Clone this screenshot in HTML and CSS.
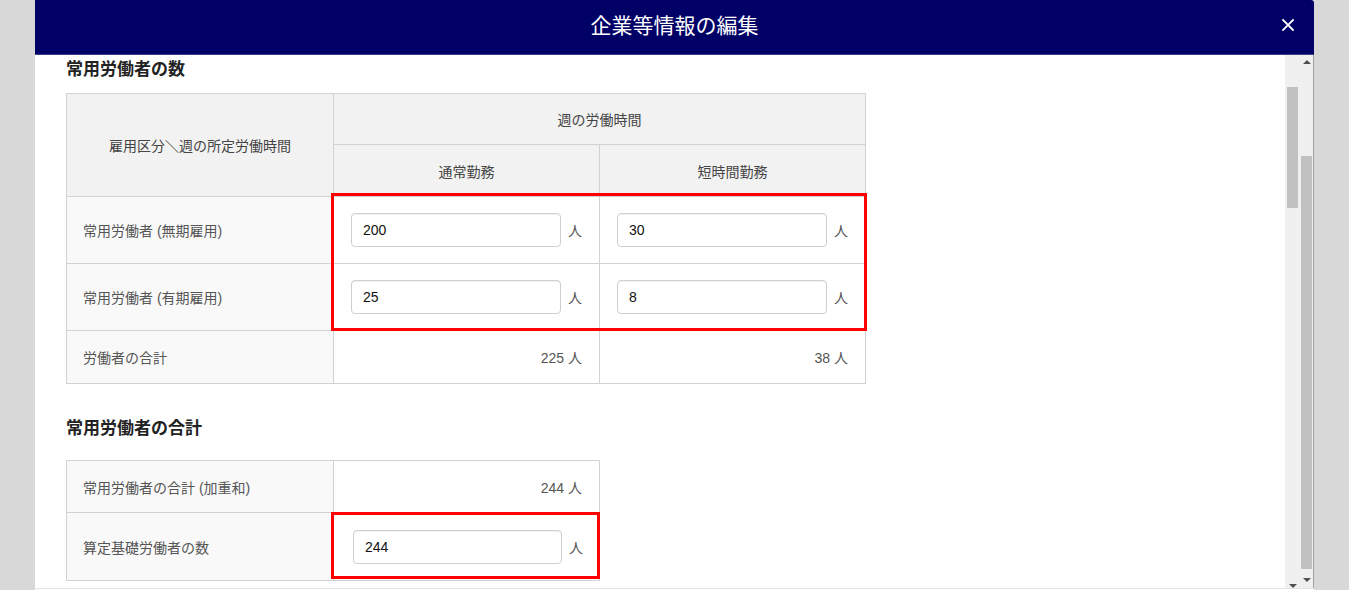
FILE: index.html
```html
<!DOCTYPE html>
<html lang="ja">
<head>
<meta charset="utf-8">
<title>企業等情報の編集</title>
<link rel="stylesheet" href="styles.css">
</head>
<body>
<div class="modal">
  <header class="modal-header">
    <span class="spacer"></span>
    <h1 class="modal-title">企業等情報の編集</h1>
    <button class="close" type="button" aria-label="閉じる">
      <svg width="12" height="12" viewBox="0 0 12 12"><path d="M1 1 L11 11 M11 1 L1 11" stroke="#fff" stroke-width="1.8" fill="none" stroke-linecap="square"/></svg>
    </button>
  </header>
  <div class="modal-body">
    <div class="content">
      <h2 class="section-title first">常用労働者の数</h2>
      <div class="table-wrap">
        <table class="grid grid-main">
          <colgroup><col class="c-label"><col class="c-val"><col class="c-val"></colgroup>
          <tr class="r-h1"><th rowspan="2" class="th-corner">雇用区分＼週の所定労働時間</th><th colspan="2">週の労働時間</th></tr>
          <tr class="r-h2"><th>通常勤務</th><th>短時間勤務</th></tr>
          <tr class="r-input">
            <td class="label">常用労働者 (無期雇用)</td>
            <td class="cell-input"><div class="field"><input class="num-input" type="text" value="200"><span class="unit">人</span></div></td>
            <td class="cell-input"><div class="field"><input class="num-input" type="text" value="30"><span class="unit">人</span></div></td>
          </tr>
          <tr class="r-input">
            <td class="label">常用労働者 (有期雇用)</td>
            <td class="cell-input"><div class="field"><input class="num-input" type="text" value="25"><span class="unit">人</span></div></td>
            <td class="cell-input"><div class="field"><input class="num-input" type="text" value="8"><span class="unit">人</span></div></td>
          </tr>
          <tr class="r-total">
            <td class="label">労働者の合計</td>
            <td class="num">225 人</td>
            <td class="num">38 人</td>
          </tr>
        </table>
        <div class="highlight hl-1"></div>
      </div>

      <h2 class="section-title second">常用労働者の合計</h2>
      <div class="table-wrap">
        <table class="grid grid-sum">
          <colgroup><col class="c-label"><col class="c-val"></colgroup>
          <tr class="r-sum1">
            <td class="label">常用労働者の合計 (加重和)</td>
            <td class="num">244 人</td>
          </tr>
          <tr class="r-sum2">
            <td class="label">算定基礎労働者の数</td>
            <td class="cell-input cell-input-sum"><div class="field"><input class="num-input" type="text" value="244"><span class="unit">人</span></div></td>
          </tr>
        </table>
        <div class="highlight hl-2"></div>
      </div>
    </div>
    <div class="scrollbar">
      <div class="lane lane-inner">
        <div class="thumb thumb-inner"></div>
        <div class="arrow-down arrow-inner"></div>
      </div>
      <div class="lane lane-outer">
        <div class="arrow-up"></div>
        <div class="thumb thumb-outer"></div>
        <div class="arrow-down arrow-outer"></div>
      </div>
    </div>
  </div>
  <div class="modal-footer"></div>
</div>
</body>
</html>
```

FILE: styles.css
```css
html, body {
  margin: 0;
  padding: 0;
  height: 590px;
  overflow: hidden;
  background: #d8d8d8;
  font-family: "Liberation Sans", "Noto Sans CJK JP", sans-serif;
}

.modal {
  margin: 0 35px;
  width: 1279px;
  height: 590px;
  background: #fff;
  display: flex;
  flex-direction: column;
  border-top-right-radius: 3px;
}

.modal-header {
  box-sizing: border-box;
  height: 55px;
  flex: none;
  background: #000066;
  border-bottom: 1px solid #3c3c8a;
  border-top-right-radius: 3px;
  display: grid;
  grid-template-columns: 1fr auto 1fr;
  align-items: center;
  padding-bottom: 5px;
}

.modal-title {
  margin: 0;
  color: #fff;
  font-family: "Noto Sans CJK JP", sans-serif;
  font-weight: 400;
  font-size: 21px;
  line-height: 1;
  letter-spacing: 0;
}

.close {
  justify-self: end;
  margin-right: 20px;
  padding: 0;
  border: 0;
  background: transparent;
  width: 12px;
  height: 12px;
  display: flex;
}

.modal-body {
  height: 533px;
  flex: none;
  display: flex;
  overflow: hidden;
}

.content {
  flex: 1;
  overflow: hidden;
  padding-left: 31px;
}

.section-title {
  margin: 0;
  font-size: 17px;
  line-height: 24px;
  font-weight: 700;
  color: #222;
  font-family: "Noto Sans CJK JP", sans-serif;
}
.section-title.first { margin: 1px 0 13px; }
.section-title.second { margin: 31px 0 21px; }

.table-wrap {
  position: relative;
  width: max-content;
}

.grid {
  border-collapse: collapse;
  table-layout: fixed;
  font-size: 14px;
  color: #555;
}
.grid-main { width: 800px; }
.grid-sum { width: 533px; }

.c-label { width: 267px; }
.c-val { width: 266px; }

.grid th, .grid td {
  border: 1px solid #d2d2d2;
  padding: 0 17px;
  vertical-align: middle;
}

.grid th {
  background: #f2f2f2;
  font-weight: 400;
  color: #444;
  text-align: center;
}

.grid td.label {
  background: #f9f9f9;
  text-align: left;
  padding-left: 16px;
}

.grid td.num {
  text-align: right;
  padding-right: 17px;
}

.r-h1 { height: 51px; }
.r-h2 { height: 52px; }
.r-input { height: 67px; }
.r-total { height: 53px; }
.r-sum1 { height: 52px; }
.r-sum2 { height: 68px; }

.field {
  display: flex;
  align-items: center;
  gap: 7px;
}

.num-input {
  box-sizing: border-box;
  flex: 1;
  min-width: 0;
  height: 34px;
  padding: 0 11px;
  border: 1px solid #cfcfcf;
  border-radius: 4px;
  box-shadow: inset 0 1px 1px rgba(0,0,0,0.06);
  font-family: "Liberation Sans", sans-serif;
  font-size: 14px;
  color: #111;
  background: #fff;
}

.unit {
  font-size: 14px;
  color: #555;
}

.cell-input-sum {
  padding-left: 19px !important;
  padding-right: 16px !important;
}

.highlight {
  position: absolute;
  box-sizing: border-box;
  border: 3px solid #ff0000;
  pointer-events: none;
}
.hl-1 { left: 265px; top: 100px; width: 536px; height: 138px; }
.hl-2 { left: 265px; top: 52px; width: 269px; height: 67px; }

/* fake scrollbars */
.scrollbar {
  flex: none;
  width: 28px;
  background: #f0f0f0;
  border-right: 1px solid #a3a3a3;
  display: flex;
}
.lane {
  display: flex;
  flex-direction: column;
  align-items: center;
}
.lane-inner { width: 15px; }
.lane-outer { width: 13px; }

.thumb {
  width: 11px;
  background: #c1c1c1;
  flex: none;
}
.thumb-inner { margin-top: 32px; height: 121px; }
.thumb-outer { margin-top: 92px; height: 413px; }

.arrow-up {
  margin-top: 5px;
  width: 0;
  height: 0;
  border-left: 4px solid transparent;
  border-right: 4px solid transparent;
  border-bottom: 4px solid #505050;
}
.arrow-down {
  width: 0;
  height: 0;
  border-left: 4px solid transparent;
  border-right: 4px solid transparent;
  border-top: 4px solid #505050;
}
.arrow-inner { margin-top: auto; }
.arrow-outer { margin-top: 9px; }

.modal-footer {
  flex: none;
  height: 1px;
  border-top: 1px solid #e3e3e3;
  background: #fff;
}
```
